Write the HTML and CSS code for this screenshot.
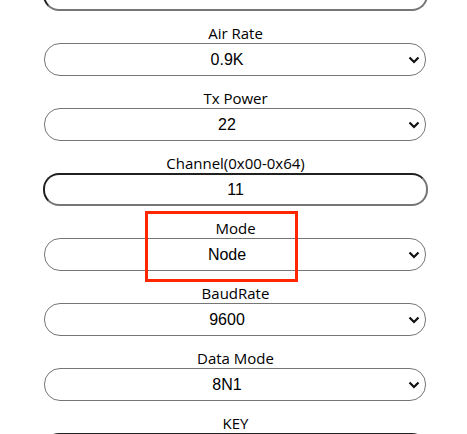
FILE: index.html
```html
<!DOCTYPE html>
<html lang="en">
<head>
<meta charset="utf-8">
<meta name="viewport" content="width=device-width, initial-scale=1">
<title>Settings</title>
<link rel="stylesheet" href="styles.css">
</head>
<body>
<main class="page">
  <form class="settings">
    <div class="field">
      <input class="control" type="text" aria-label="Address">
    </div>
    <div class="field">
      <label class="label" for="air-rate">Air Rate</label>
      <select class="control select" id="air-rate"><option>0.9K</option></select>
    </div>
    <div class="field">
      <label class="label" for="tx-power">Tx Power</label>
      <select class="control select" id="tx-power"><option>22</option></select>
    </div>
    <div class="field">
      <label class="label" for="channel">Channel(0x00-0x64)</label>
      <input class="control" id="channel" type="text" value="11">
    </div>
    <div class="field">
      <label class="label" for="mode">Mode</label>
      <select class="control select" id="mode"><option>Node</option></select>
      <span class="highlight"></span>
    </div>
    <div class="field">
      <label class="label" for="baud-rate">BaudRate</label>
      <select class="control select" id="baud-rate"><option>9600</option></select>
    </div>
    <div class="field">
      <label class="label" for="data-mode">Data Mode</label>
      <select class="control select" id="data-mode"><option>8N1</option></select>
    </div>
    <div class="field">
      <label class="label" for="key">KEY</label>
      <input class="control" id="key" type="text">
    </div>
  </form>
</main>
</body>
</html>
```

FILE: styles.css
```css
* {
  box-sizing: border-box;
}

body {
  margin: 0;
  background: #fff;
  color: #000;
  font-family: "Segoe UI", "Open Sans", "Noto Sans", sans-serif;
  font-size: 15px;
}

/* The form is scrolled slightly past its first field. */
.page {
  height: 100vh;
  overflow: hidden;
}

.settings {
  display: flex;
  flex-direction: column;
  gap: 12px;
  margin-top: -22px;
  padding: 0 39px 0 43px;
}

.field {
  position: relative;
  display: flex;
  flex-direction: column;
}

.label {
  line-height: 20px;
  text-align: center;
}

.control {
  height: 33px;
  width: 100%;
  margin: 0;
  padding: 0 2px;
  border: 2px inset #767676;
  border-radius: 16px;
  background: #fff;
  color: #000;
  font-family: "Liberation Sans", Arial, sans-serif;
  font-size: 16px;
  text-align: center;
}

.select {
  appearance: none;
  width: auto;
  margin: 0 2px 0 1px;
  padding: 0 16px 0 0;
  border: 1px solid #767676;
  background: #fff url("data:image/svg+xml,%3Csvg xmlns='http://www.w3.org/2000/svg' viewBox='0 0 12 8'%3E%3Cpath d='M1.5 1.5 6 6l4.5-4.5' fill='none' stroke='%23101010' stroke-width='2.2'/%3E%3C/svg%3E") no-repeat right 5px center / 12px 8px;
}

.highlight {
  position: absolute;
  top: -7px;
  bottom: -11px;
  left: calc(50% - 91px);
  width: 153px;
  border: 3px solid #ff2600;
  pointer-events: none;
}
```
